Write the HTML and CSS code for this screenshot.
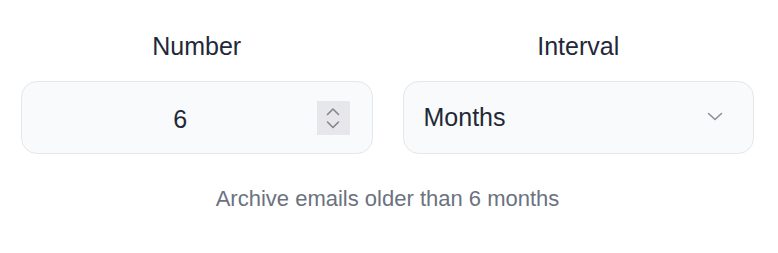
FILE: index.html
```html
<!DOCTYPE html>
<html lang="en">
<head>
    <meta charset="UTF-8">
    <meta name="viewport" content="width=device-width, initial-scale=1.0">
    <title>Archive settings</title>
    <link rel="stylesheet" href="styles.css">
</head>
<body>
    <div class="panel">
        <div class="fields">
            <div class="field">
                <label class="label" for="number">Number</label>
                <div class="control">
                    <input class="input" id="number" type="text" value="6">
                    <span class="spinner">
                        <svg width="14" height="34" viewBox="0 0 14 34" fill="none" stroke="#858592" stroke-width="1.6" stroke-linecap="round" stroke-linejoin="round">
                            <path d="M1.5 13.5 L7 8 L12.5 13.5"/>
                            <path d="M1.5 21 L7 26.5 L12.5 21"/>
                        </svg>
                    </span>
                </div>
            </div>
            <div class="field">
                <label class="label" for="interval">Interval</label>
                <div class="control">
                    <select class="input select" id="interval">
                        <option>Days</option>
                        <option>Weeks</option>
                        <option selected>Months</option>
                        <option>Years</option>
                    </select>
                    <svg class="chevron" width="16" height="9" viewBox="0 0 16 9" fill="none" stroke="#8b8f98" stroke-width="1.6" stroke-linecap="round" stroke-linejoin="round">
                        <path d="M1.5 1.5 L8 7.5 L14.5 1.5"/>
                    </svg>
                </div>
            </div>
        </div>
        <p class="hint">Archive emails older than 6 months</p>
    </div>
</body>
</html>
```

FILE: styles.css
```css
* {
    margin: 0;
    padding: 0;
    box-sizing: border-box;
}
body {
    background: #fff;
    font-family: "Liberation Sans", Arial, sans-serif;
}
.panel {
    padding: 29px 24px 0 21px;
}
.fields {
    display: grid;
    grid-template-columns: 1fr 1fr;
    gap: 30px;
}
.field {
    display: flex;
    flex-direction: column;
}
.label {
    text-align: center;
    font-size: 25px;
    line-height: 35px;
    color: #1f2937;
    margin-bottom: 17px;
}
.control {
    position: relative;
}
.input {
    display: block;
    width: 100%;
    height: 73px;
    border: 1px solid #e5e7eb;
    border-radius: 16px;
    background: #f9fafb;
    font-family: inherit;
    font-size: 25px;
    color: #1f2937;
    outline: none;
}
#number {
    text-align: center;
    padding: 4px 55px 0 22px;
}
.select {
    appearance: none;
    -webkit-appearance: none;
    padding: 0 50px 2px 20px;
}
.spinner {
    position: absolute;
    right: 23px;
    top: 20px;
    width: 33px;
    height: 34px;
    background: #e6e6eb;
    display: flex;
    align-items: center;
    justify-content: center;
}
.chevron {
    position: absolute;
    right: 31px;
    top: 31px;
}
.hint {
    text-align: center;
    font-size: 22px;
    line-height: 33px;
    color: #6b7280;
    margin-top: 28px;
}
```
